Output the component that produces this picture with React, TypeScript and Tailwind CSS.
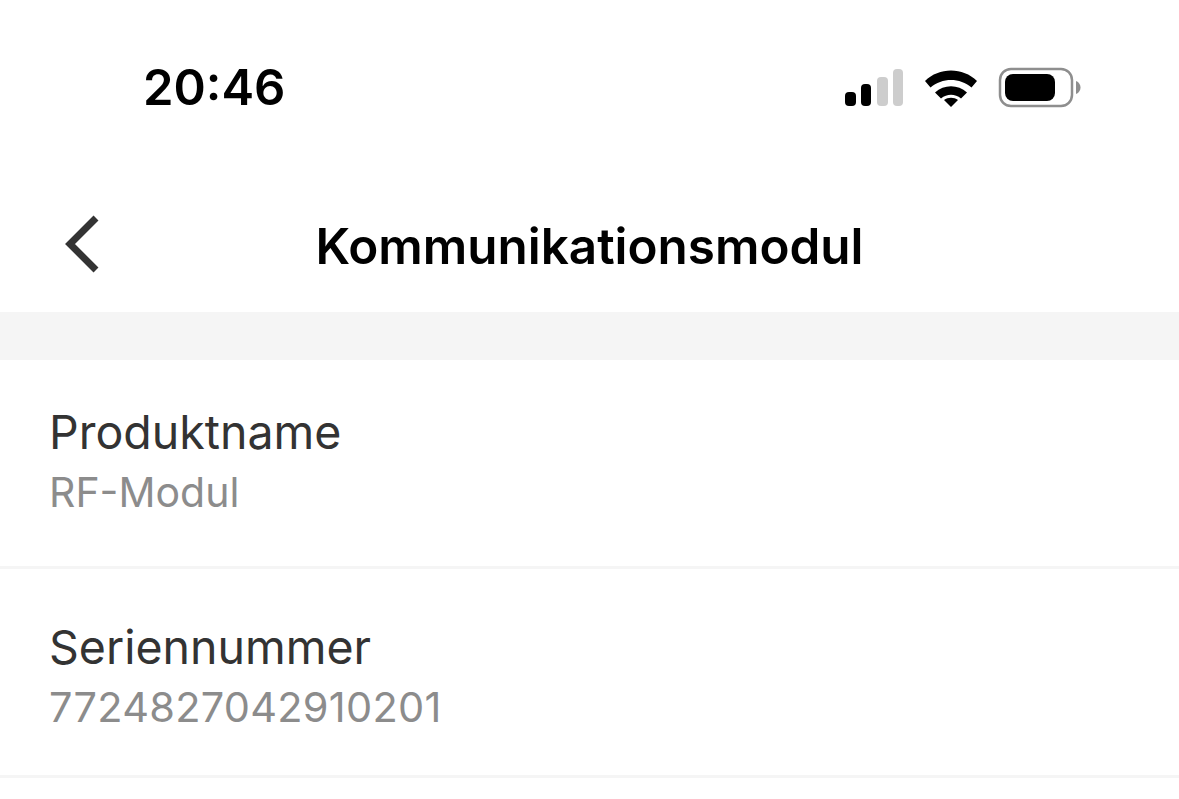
function SignalIcon() {
  return (
    <svg width="60" height="40" viewBox="0 0 60 40" className="block">
      <rect x="1" y="24" width="11" height="14" rx="4" fill="#000" />
      <rect x="17" y="16" width="10" height="22" rx="4" fill="#000" />
      <rect x="33" y="9" width="11" height="29" rx="4" fill="#cdcdcd" />
      <rect x="49" y="1" width="10" height="37" rx="4" fill="#cdcdcd" />
    </svg>
  );
}

function WifiIcon() {
  return (
    <svg width="54" height="40" viewBox="0 0 54 40" className="block">
      <path d="M1 13 C15 -1 39 -1 53 13 L47.500 19.500 C36 9.500 18 9.500 6.500 19.500 Z" fill="#000" />
      <path d="M11 24.500 C20 16 34 16 43 24.500 L37 30.500 C31 25.500 23 25.500 17 30.500 Z" fill="#000" />
      <path d="M20 32 C24 29 30 29 34 32 L27 39 Z" fill="#000" />
    </svg>
  );
}

function BatteryIcon() {
  return (
    <svg width="84" height="42" viewBox="0 0 84 42" className="block">
      <rect x="2" y="2" width="72" height="37" rx="11" fill="none" stroke="#8e8e8e" strokeWidth="2.500" />
      <rect x="7" y="7" width="50" height="27" rx="8" fill="#000" />
      <path d="M78 14 C81 15 82.500 18 82.500 20.500 C82.500 23 81 26 78 27 Z" fill="#8e8e8e" />
    </svg>
  );
}

function BackIcon() {
  return (
    <svg width="44" height="64" viewBox="0 0 44 64" className="absolute left-[62px] top-[29px] block">
      <path d="M34 5 L8 31 L34 57" fill="none" stroke="#333333" strokeWidth="7" />
    </svg>
  );
}

function InfoRow({ label, value, top, valueClass }: { label: string; value: string; top: string; valueClass: string }) {
  return (
    <div className={`flex h-[209px] flex-col border-b-[3px] border-[#f5f5f5] pl-[49px] ${top}`}>
      <span className="text-[46.5px] leading-[56px] text-[#333333]">{label}</span>
      <span className={`mt-[7px] leading-[50px] text-[#8c8c8c] ${valueClass}`}>{value}</span>
    </div>
  );
}

export default function App() {
  return (
    <div className="h-[799px] w-[1179px] overflow-hidden bg-white font-['Inter',sans-serif]">
      <div className="flex h-[184px] items-start justify-between pl-[143px] pr-[97px] pt-[58px]">
        <span className="text-[49px] font-semibold leading-[60px] text-black">20:46</span>
        <div className="flex items-center gap-[20px] pt-[9px]">
          <SignalIcon />
          <WifiIcon />
          <BatteryIcon />
        </div>
      </div>
      <div className="relative flex h-[128px] items-start justify-center pt-[32px]">
        <BackIcon />
        <h1 className="text-[49.4px] font-semibold leading-[60px] text-black">Kommunikationsmodul</h1>
      </div>
      <div className="h-[48px] bg-[#f5f5f5]" />
      <InfoRow label="Produktname" value="RF-Modul" top="pt-[44px]" valueClass="text-[41px]" />
      <InfoRow
        label="Seriennummer"
        value="7724827042910201"
        top="pt-[50px]"
        valueClass="text-[41.5px] tracking-[0.25px]"
      />
    </div>
  );
}
